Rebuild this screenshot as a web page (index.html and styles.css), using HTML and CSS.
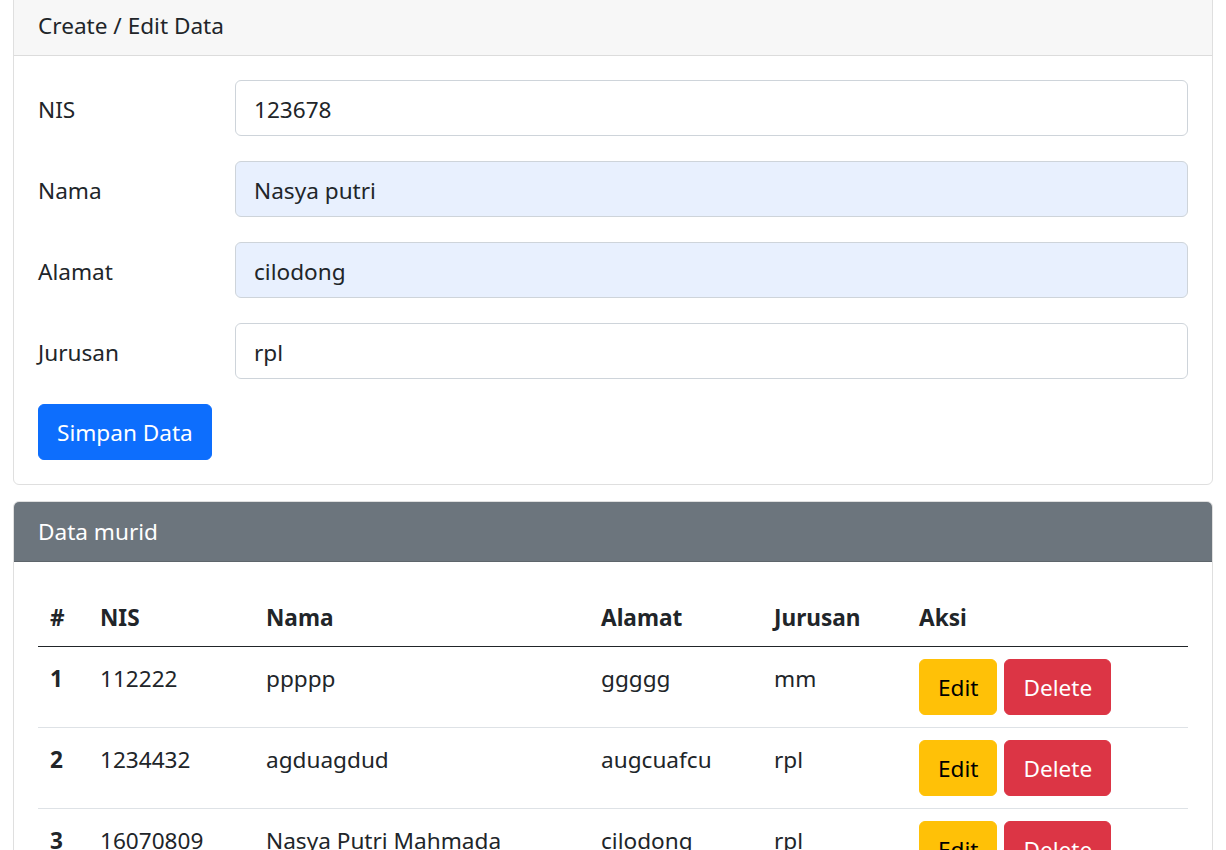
FILE: index.html
```html
<!DOCTYPE html>
<html lang="id">
<head>
<meta charset="utf-8">
<title>Data Murid</title>
<link rel="stylesheet" href="styles.css">
</head>
<body>
<div class="container">
  <div class="card card-form">
    <div class="card-header">Create / Edit Data</div>
    <div class="card-body">
      <form class="form">
        <div class="form-row">
          <label class="form-label" for="nis">NIS</label>
          <input class="form-control" id="nis" type="text" value="123678">
        </div>
        <div class="form-row">
          <label class="form-label" for="nama">Nama</label>
          <input class="form-control autofilled" id="nama" type="text" value="Nasya putri">
        </div>
        <div class="form-row">
          <label class="form-label" for="alamat">Alamat</label>
          <input class="form-control autofilled" id="alamat" type="text" value="cilodong">
        </div>
        <div class="form-row">
          <label class="form-label" for="jurusan">Jurusan</label>
          <input class="form-control" id="jurusan" type="text" value="rpl">
        </div>
        <button class="btn btn-primary" type="button">Simpan Data</button>
      </form>
    </div>
  </div>

  <div class="card card-table">
    <div class="card-header header-secondary">Data murid</div>
    <div class="card-body">
      <table class="table">
        <colgroup>
          <col class="c-no"><col class="c-nis"><col class="c-nama"><col class="c-alamat"><col class="c-jurusan"><col class="c-aksi">
        </colgroup>
        <thead>
          <tr><th>#</th><th>NIS</th><th>Nama</th><th>Alamat</th><th>Jurusan</th><th>Aksi</th></tr>
        </thead>
        <tbody>
          <tr>
            <th>1</th><td>112222</td><td>ppppp</td><td>ggggg</td><td>mm</td>
            <td class="actions"><button class="btn btn-warning" type="button">Edit</button><button class="btn btn-danger" type="button">Delete</button></td>
          </tr>
          <tr>
            <th>2</th><td>1234432</td><td>agduagdud</td><td>augcuafcu</td><td>rpl</td>
            <td class="actions"><button class="btn btn-warning" type="button">Edit</button><button class="btn btn-danger" type="button">Delete</button></td>
          </tr>
          <tr>
            <th>3</th><td>16070809</td><td>Nasya Putri Mahmada</td><td>cilodong</td><td>rpl</td>
            <td class="actions"><button class="btn btn-warning" type="button">Edit</button><button class="btn btn-danger" type="button">Delete</button></td>
          </tr>
        </tbody>
      </table>
    </div>
  </div>
</div>
</body>
</html>
```

FILE: styles.css
```css
* { box-sizing: border-box; }

html, body {
  margin: 0;
  padding: 0;
  background: #fff;
}

body {
  font-family: "Noto Sans", "Open Sans", sans-serif;
  font-size: 22.6px;
  line-height: 36px;
  color: #212529;
}

.container {
  padding: 0 13px;
}

.card {
  border: 1px solid #dfdfdf;
  border-radius: 6px;
  background: #fff;
  overflow: hidden;
}

.card-form {
  margin-top: -6px;
}

.card-table {
  margin-top: 16px;
}

.card-header {
  padding: 13px 24px 11px;
  background: #f7f7f7;
  border-bottom: 1px solid #dcdcdc;
}

.header-secondary {
  background: #6c757d;
  color: #fff;
  border-bottom-color: #5e656b;
  padding: 12px 24px 11px;
}

.card-body {
  padding: 24px;
}

.form-row {
  display: flex;
  align-items: flex-start;
  margin-bottom: 25px;
}

.form-label {
  width: 197px;
  flex: none;
  padding-top: 12px;
  line-height: 36px;
}

.form-control {
  flex: 1;
  height: 56px;
  border: 1px solid #ced4da;
  border-radius: 6px;
  padding: 10px 18px 8px;
  font: inherit;
  color: #212529;
  background: #fff;
  outline: none;
}

.autofilled {
  background: #e8f0fe;
}

.btn {
  display: inline-block;
  height: 56px;
  padding: 10px 18px 8px;
  border: 1px solid transparent;
  border-radius: 6px;
  font: inherit;
  line-height: 36px;
  cursor: pointer;
  vertical-align: top;
}

.btn-primary {
  background: #0d6efd;
  border-color: #0d6efd;
  color: #fff;
}

.btn-warning {
  background: #ffc107;
  border-color: #ffc107;
  color: #000;
}

.btn-danger {
  background: #dc3545;
  border-color: #dc3545;
  color: #fff;
}

.table {
  width: 100%;
  border-collapse: collapse;
  table-layout: fixed;
}

.c-no { width: 50px; }
.c-nis { width: 166px; }
.c-nama { width: 335px; }
.c-alamat { width: 173px; }
.c-jurusan { width: 145px; }
.c-aksi { width: auto; }

.table th,
.table td {
  padding: 14px 12px 10px;
  text-align: left;
  vertical-align: top;
  border-bottom: 1px solid #dee2e6;
  line-height: 36px;
  white-space: nowrap;
}

.table th {
  font-weight: 700;
}

.table td {
  font-weight: 400;
}

.table thead th {
  border-bottom: 1px solid #212529;
}

.table td.actions {
  padding: 12px;
}

.actions .btn + .btn {
  margin-left: 7px;
}
```
